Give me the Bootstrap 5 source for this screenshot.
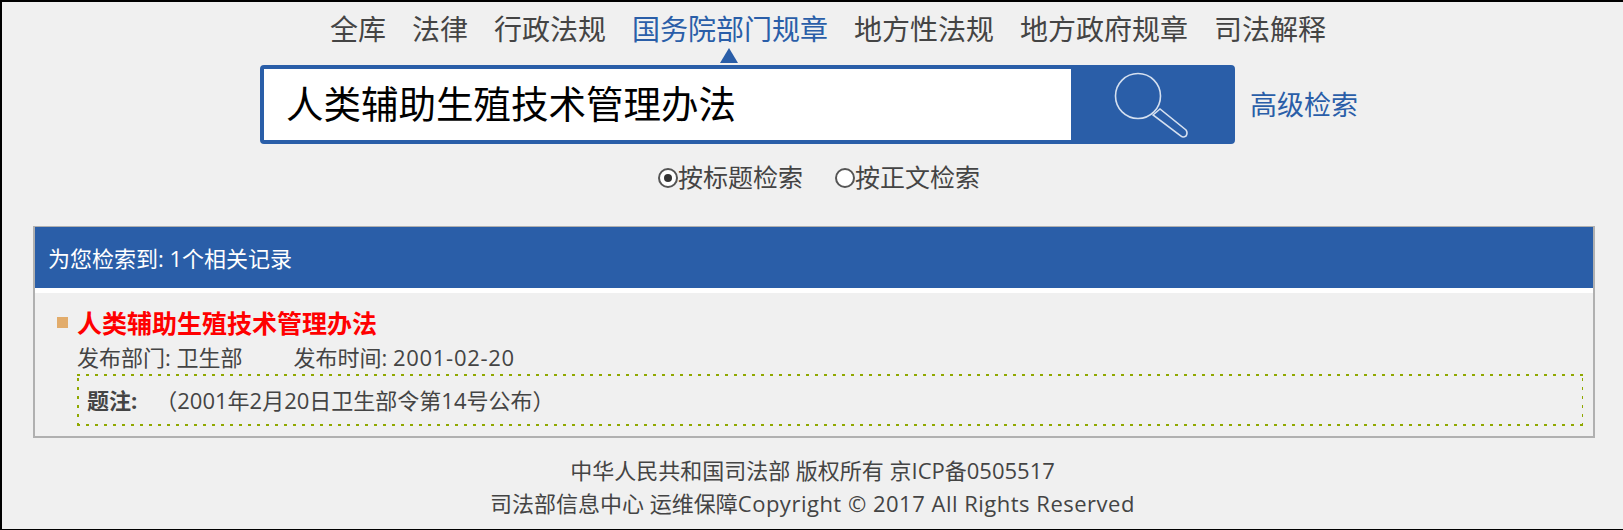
<!DOCTYPE html>
<html lang="zh-CN">
<head>
  <meta charset="UTF-8">
  <meta name="viewport" content="width=device-width, initial-scale=1.0">
  <title>人类辅助生殖技术管理办法</title>
  <link href="https://cdn.jsdelivr.net/npm/bootstrap@5.3.0/dist/css/bootstrap.min.css" rel="stylesheet">
  <style>
    html, body { height: 100%; }
    body { background: #f0f0f0; color: #444; font-family: "Open Sans", "Noto Sans CJK SC", sans-serif; }
    .page-frame { height: 530px; border-top: 2px solid #000; border-left: 2px solid #000; border-bottom: 1px solid #000; overflow: hidden; }
    .lib-tabs { height: 63px; padding-top: 7px; padding-left: 31px; font-size: 28px; line-height: 40px; gap: 26px; }
    .lib-tabs a { color: #444; text-decoration: none; position: relative; white-space: nowrap; }
    .lib-tabs a.on { color: #2a5ea8; }
    .lib-tabs a.on::after { content: ""; position: absolute; left: 50%; bottom: 2px; margin-left: -10px; border-left: 9px solid transparent; border-right: 9px solid transparent; border-bottom: 15px solid #2a5ea8; }
    .search-row { margin-left: 258px; }
    .search-box { width: 975px; height: 79px; border: 4px solid #2a5ea8; border-radius: 4px; background: #2a5ea8; }
    .search-box input { width: 807px; border: 0; outline: 0; background: #fff; padding: 0 22px; font-size: 37.5px; color: #000; font-family: inherit; }
    .search-btn { flex: 1; border: 0; background: #2a5ea8; padding: 0; }
    .adv-link { margin-left: 15px; margin-top: 2px; font-size: 27px; color: #2a5ea8; text-decoration: none; }
    .scope-row { height: 62px; padding-top: 6px; padding-left: 13px; font-size: 25px; gap: 32px; }
    .scope-row label { display: flex; align-items: center; }
    .dot-radio { width: 20px; height: 20px; border: 2px solid #555; border-radius: 50%; background: #fff; display: inline-block; position: relative; }
    .dot-radio.picked::after { content: ""; position: absolute; inset: 4px; background: #333; border-radius: 50%; }
    .result-box { margin: 20px 0 0 31px; width: 1562px; height: 212px; border: 2px solid #b0b0b0; border-top-width: 1px; }
    .result-head { height: 61px; background: #2a5ea8; color: #fff; font-size: 22px; padding: 1px 0 0 13px; }
    .result-gap { height: 5px; background: #fff; }
    .result-body { padding: 12px 10px 0 42px; }
    .doc-title { position: relative; color: #f00; font-size: 25px; font-weight: 700; line-height: 36px; }
    .doc-title::before { content: ""; position: absolute; left: -20px; top: 12px; width: 11px; height: 11px; background: #e2ac6b; }
    .doc-meta { font-size: 22px; line-height: 32px; gap: 51px; }
    .date-text { letter-spacing: .7px; }
    .doc-note {
      height: 52px; margin-top: 1px; font-size: 22px; padding-left: 10px;
      background:
        repeating-linear-gradient(90deg, #8fa800 0 3px, transparent 3px 9px) top / 100% 2px no-repeat,
        repeating-linear-gradient(90deg, #8fa800 0 3px, transparent 3px 9px) bottom / 100% 2px no-repeat,
        repeating-linear-gradient(0deg, #8fa800 0 3px, transparent 3px 9px) left / 2px 100% no-repeat,
        repeating-linear-gradient(0deg, #8fa800 0 3px, transparent 3px 9px) right / 1px 100% no-repeat;
    }
    .doc-note b { margin-right: 18px; }
    .site-foot { padding-top: 16px; font-size: 22px; line-height: 33px; }
    .latin-run { letter-spacing: .5px; }
  </style>
</head>
<body>
<div class="page-frame">
  <nav class="lib-tabs d-flex justify-content-center">
    <a href="#">全库</a>
    <a href="#">法律</a>
    <a href="#">行政法规</a>
    <a href="#" class="on">国务院部门规章</a>
    <a href="#">地方性法规</a>
    <a href="#">地方政府规章</a>
    <a href="#">司法解释</a>
  </nav>

  <div class="search-row d-flex align-items-center">
    <div class="search-box d-flex">
      <input type="text" value="人类辅助生殖技术管理办法">
      <button class="search-btn d-flex justify-content-center align-items-center" type="button" aria-label="搜索">
        <svg width="74" height="66" viewBox="0 0 74 66" fill="none" stroke="#d5e0f0" stroke-width="1.6">
          <circle cx="24" cy="24" r="22.5"/>
          <path d="M39 43 L46 37 L72 58 Q74 61 72 64 Q69 66 67 64 Z"/>
        </svg>
      </button>
    </div>
    <a href="#" class="adv-link">高级检索</a>
  </div>

  <div class="scope-row d-flex justify-content-center align-items-center">
    <label><span class="dot-radio picked"></span>按标题检索</label>
    <label><span class="dot-radio"></span>按正文检索</label>
  </div>

  <div class="result-box">
    <div class="result-head d-flex align-items-center">为您检索到: 1个相关记录</div>
    <div class="result-gap"></div>
    <div class="result-body">
      <div class="doc-title">人类辅助生殖技术管理办法</div>
      <div class="doc-meta d-flex">
        <span>发布部门: 卫生部</span>
        <span>发布时间: <span class="date-text">2001-02-20</span></span>
      </div>
      <div class="doc-note d-flex align-items-center"><b>题注:</b>（2001年2月20日卫生部令第14号公布）</div>
    </div>
  </div>

  <footer class="site-foot text-center">
    <div>中华人民共和国司法部 版权所有 京ICP备0505517</div>
    <div>司法部信息中心 运维保障<span class="latin-run">Copyright © 2017 All Rights Reserved</span></div>
  </footer>
</div>
<script src="https://cdn.jsdelivr.net/npm/bootstrap@5.3.0/dist/js/bootstrap.bundle.min.js"></script>
</body>
</html>
